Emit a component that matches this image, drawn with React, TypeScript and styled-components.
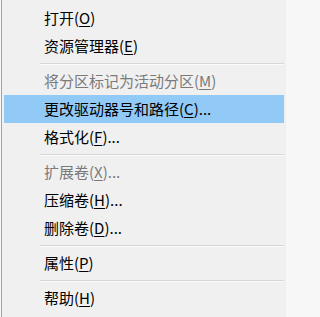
import styled, { createGlobalStyle } from 'styled-components';

const GlobalStyle = createGlobalStyle`
  html, body {
    margin: 0;
    padding: 0;
    background: #f7f7f7;
  }
  body {
    font-family: "Noto Sans CJK SC", "Noto Sans", sans-serif;
  }
`;

type Entry =
  | { type: 'item'; label: string; key: string; tail?: string; disabled?: boolean; active?: boolean }
  | { type: 'sep' };

const entries: Entry[] = [
  { type: 'item', label: '打开', key: 'O' },
  { type: 'item', label: '资源管理器', key: 'E' },
  { type: 'sep' },
  { type: 'item', label: '将分区标记为活动分区', key: 'M', disabled: true },
  { type: 'item', label: '更改驱动器号和路径', key: 'C', tail: '...', active: true },
  { type: 'item', label: '格式化', key: 'F', tail: '...' },
  { type: 'sep' },
  { type: 'item', label: '扩展卷', key: 'X', tail: '...', disabled: true },
  { type: 'item', label: '压缩卷', key: 'H', tail: '...' },
  { type: 'item', label: '删除卷', key: 'D', tail: '...' },
  { type: 'sep' },
  { type: 'item', label: '属性', key: 'P' },
  { type: 'sep' },
  { type: 'item', label: '帮助', key: 'H' },
];

const App = () => {
  return (
    <>
      <GlobalStyle />
      <Menu>
        {entries.map((e, i) =>
          e.type === 'sep' ? (
            <Separator key={i} />
          ) : (
            <Item key={i} $disabled={e.disabled} $active={e.active}>
              {e.label}(<Mnemonic>{e.key}</Mnemonic>){e.tail}
            </Item>
          )
        )}
      </Menu>
    </>
  );
};

const Menu = styled.div`
  width: 285px;
  height: 317px;
  margin-left: 1px;
  box-sizing: border-box;
  background: #f0f0f0;
  border-left: 1px solid #a3a3a3;
  padding: 4px 2px 0 2px;
  display: flex;
  flex-direction: column;
`;

const Item = styled.div<{ $disabled?: boolean; $active?: boolean }>`
  height: 28px;
  display: flex;
  align-items: center;
  padding-left: 40px;
  font-size: 15px;
  line-height: 28px;
  white-space: nowrap;
  color: ${(p) => (p.$disabled ? '#7a7a7a' : '#000000')};
  background: ${(p) => (p.$active ? '#91c9f7' : 'transparent')};
`;

const Mnemonic = styled.span`
  text-decoration: underline;
  text-underline-offset: 2px;
`;

const Separator = styled.div`
  height: 7px;
  display: flex;
  align-items: center;
  padding-left: 36px;

  &::after {
    content: '';
    flex: 1;
    height: 1px;
    background: #d7d7d7;
    box-shadow: 0 1px 0 #fbfbfb;
  }
`;

export default App;
